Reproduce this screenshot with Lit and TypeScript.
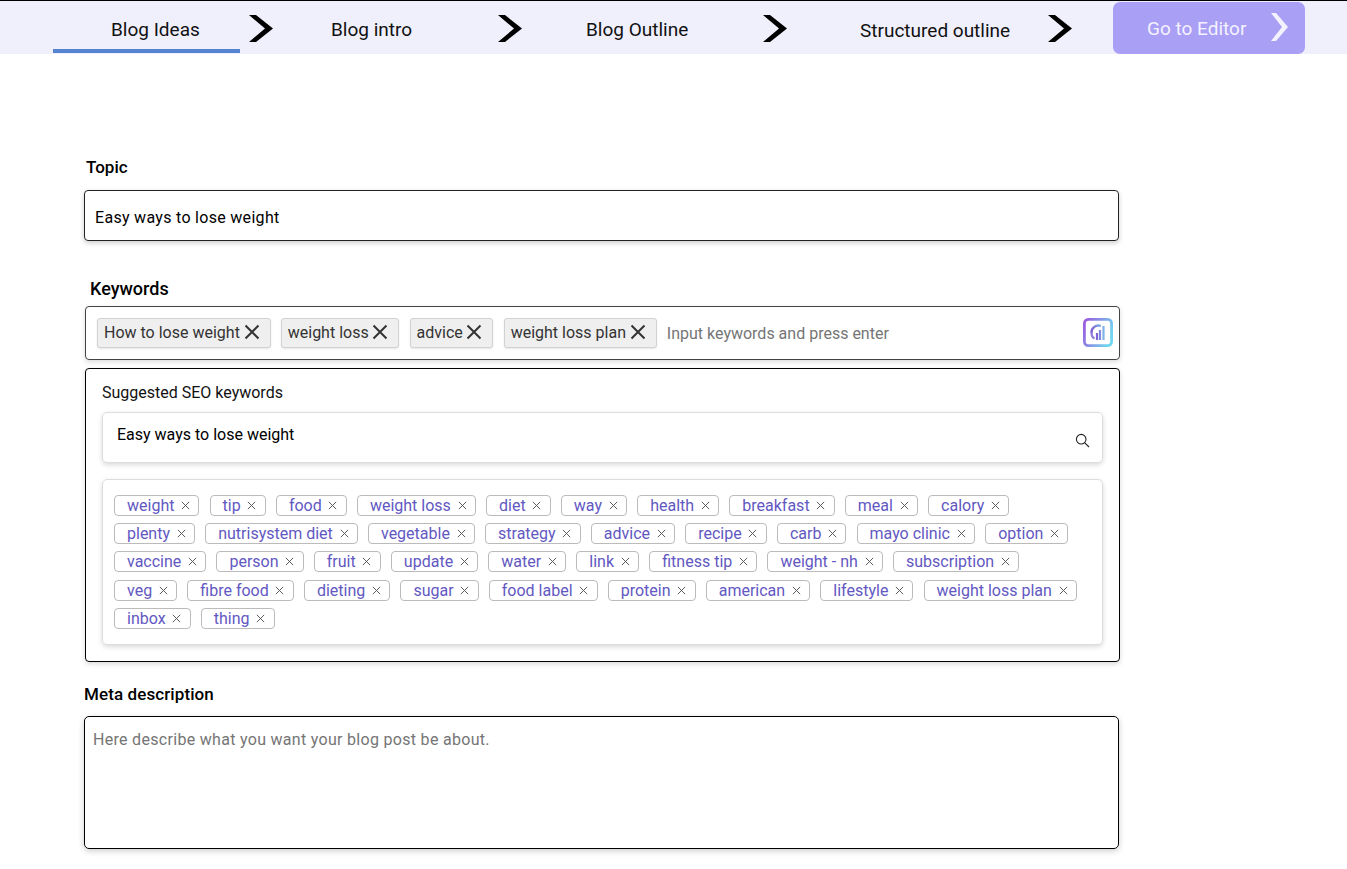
import { html, css, LitElement } from 'lit';
import { customElement } from 'lit/decorators.js';

// padLeft places the label inside the space between two arrows
const STEPS = [
  { label: 'Blog Ideas', padLeft: 58, width: 187, active: true, drop: 0 },
  { label: 'Blog intro', padLeft: 58, width: 225, active: false, drop: 0 },
  { label: 'Blog Outline', padLeft: 64, width: 241, active: false, drop: 0 },
  { label: 'Structured outline', padLeft: 73, width: 261, active: false, drop: 1 },
];

const CHOSEN = ['How to lose weight', 'weight loss', 'advice', 'weight loss plan'];

const SUGGESTED = [
  'weight', 'tip', 'food', 'weight loss', 'diet', 'way', 'health', 'breakfast', 'meal', 'calory',
  'plenty', 'nutrisystem diet', 'vegetable', 'strategy', 'advice', 'recipe', 'carb', 'mayo clinic', 'option',
  'vaccine', 'person', 'fruit', 'update', 'water', 'link', 'fitness tip', 'weight - nh', 'subscription',
  'veg', 'fibre food', 'dieting', 'sugar', 'food label', 'protein', 'american', 'lifestyle', 'weight loss plan',
  'inbox', 'thing',
];

@customElement('app-root')
export class AppRoot extends LitElement {
  static styles = css`
    :host {
      display: block;
      font-family: Roboto, "Liberation Sans", sans-serif;
      font-size: 16px;
      color: #000;
      background: #fff;
      min-height: 869px;
    }

    .nav {
      display: flex;
      align-items: flex-start;
      height: 53px;
      padding-left: 53px;
      background: #f0f0fd;
      border-top: 1px solid #000;
      font-size: 19px;
      color: #111;
    }

    .step {
      box-sizing: border-box;
      flex: none;
      height: 52px;
      padding-top: 18px;
      line-height: 22px;
      white-space: nowrap;
    }

    .step.active {
      border-bottom: 4px solid #5585d0;
    }

    .arrow {
      flex: none;
      width: 24px;
      height: 27px;
      margin-top: 14px;
    }

    .step.active + .arrow {
      margin-left: 9px;
    }

    .go {
      display: flex;
      align-items: center;
      box-sizing: border-box;
      width: 192px;
      height: 52px;
      margin: 1px 0 0 41px;
      padding: 1px 0 0 34px;
      background: #a99ff5;
      border-radius: 7px;
      color: #f4f2ff;
      font-size: 19px;
    }

    .go svg {
      width: 17px;
      height: 28px;
      margin: -4px 0 0 25px;
    }

    .form {
      display: flex;
      flex-direction: column;
      width: 1036px;
      margin-left: 84px;
      padding-top: 104px;
    }

    .label {
      font-size: 17px;
      font-weight: 500;
      line-height: 19px;
    }

    .topic-label {
      margin: 0 0 13px 2px;
    }

    .topic {
      box-sizing: border-box;
      width: 1035px;
      height: 51px;
      padding: 17px 10px 0;
      border: 1px solid #222;
      border-radius: 4px;
      box-shadow: 0 2px 5px rgba(0, 0, 0, 0.2);
      letter-spacing: 0.3px;
      line-height: 19px;
    }

    .keywords-label {
      margin: 37px 0 7px 6px;
      font-size: 18px;
      line-height: 21px;
    }

    .keywords {
      display: flex;
      align-items: center;
      box-sizing: border-box;
      height: 54px;
      margin-left: 1px;
      padding: 0 6px 0 11px;
      border: 1px solid #444;
      border-radius: 4px;
      box-shadow: 0 2px 5px rgba(0, 0, 0, 0.15);
    }

    .chip {
      display: flex;
      align-items: center;
      gap: 3.7px;
      box-sizing: border-box;
      height: 30px;
      margin-right: 10.2px;
      padding: 0 10px 2px 6px;
      background: #efefef;
      border: 1px solid #d2d2d2;
      border-radius: 3px;
      box-shadow: 0 1px 2px rgba(0, 0, 0, 0.1);
      color: #333;
      white-space: nowrap;
    }

    .chip svg {
      width: 16px;
      height: 16px;
    }

    .hint {
      flex: 1;
      color: #757575;
      white-space: nowrap;
    }

    .seo-icon {
      width: 30px;
      height: 30px;
    }

    .suggest {
      box-sizing: border-box;
      height: 294px;
      margin: 8px 0 0 1px;
      padding: 14px 16px 0;
      border: 1px solid #000;
      border-radius: 4px;
      box-shadow: 0 2px 5px rgba(0, 0, 0, 0.15);
    }

    .suggest-title {
      line-height: 19px;
      color: #111;
    }

    .search {
      display: flex;
      justify-content: space-between;
      box-sizing: border-box;
      height: 51px;
      margin-top: 10px;
      padding: 12px 12px 0 14px;
      border: 1px solid #ddd;
      border-radius: 5px;
      box-shadow: 0 2px 5px rgba(0, 0, 0, 0.15);
      line-height: 19px;
    }

    .search svg {
      width: 15px;
      height: 15px;
      margin-top: 8px;
    }

    .panel {
      display: flex;
      flex-wrap: wrap;
      align-content: flex-start;
      gap: 7.2px 10.2px;
      box-sizing: border-box;
      height: 166px;
      margin-top: 16px;
      padding: 15px 20px 0 11px;
      border: 1px solid #ddd;
      border-radius: 5px;
      box-shadow: 0 2px 5px rgba(0, 0, 0, 0.15);
    }

    .tag {
      display: flex;
      align-items: center;
      gap: 6.7px;
      box-sizing: border-box;
      height: 21px;
      padding: 0 8.3px 0 12px;
      border: 1px solid #bbb;
      border-radius: 4px;
      color: #6258c2;
      white-space: nowrap;
    }

    .tag svg {
      width: 9px;
      height: 9px;
    }

    .meta-label {
      margin: 23px 0 12px;
      letter-spacing: 0.1px;
    }

    .meta {
      box-sizing: border-box;
      width: 1035px;
      height: 133px;
      padding: 13px 8px 0;
      border: 1px solid #000;
      border-radius: 5px;
      box-shadow: 0 2px 6px rgba(0, 0, 0, 0.2);
      color: #757575;
      letter-spacing: 0.3px;
      line-height: 19px;
    }
  `;

  private renderCross(color: string, weight: number) {
    return html`<svg viewBox="0 0 16 16">
      <path d="M1.5 1.5 L14.5 14.5 M14.5 1.5 L1.5 14.5" stroke=${color} stroke-width=${weight} fill="none" />
    </svg>`;
  }

  private renderSeoIcon() {
    return html`<svg class="seo-icon" viewBox="0 0 30 30">
      <defs>
        <linearGradient id="seo" x1="0" y1="0.2" x2="1" y2="0.6">
          <stop offset="0" stop-color="#9a5fe0" />
          <stop offset="1" stop-color="#6fd6ef" />
        </linearGradient>
        <linearGradient id="seo-in" x1="0" y1="0" x2="1" y2="0">
          <stop offset="0" stop-color="#7f62d8" />
          <stop offset="1" stop-color="#7fb4e8" />
        </linearGradient>
      </defs>
      <rect x="1.4" y="1.4" width="27.2" height="26.2" rx="4" fill="#fff" stroke="url(#seo)" stroke-width="2.8" />
      <path d="M8.5 15 A7 7 0 0 1 18 8" fill="none" stroke="url(#seo-in)" stroke-width="2.4" />
      <path d="M8.5 15 Q8.5 19 11.5 20.5" fill="none" stroke="#8f80dc" stroke-width="2.2" />
      <path d="M14 22 V15 M17 22 V12 M20.5 22 V8" stroke="url(#seo-in)" stroke-width="2.2" />
    </svg>`;
  }

  render() {
    return html`
      <div class="nav">
        ${STEPS.map(step => html`
          <div
            class="step ${step.active ? 'active' : ''}"
            style="width: ${step.width}px; padding-left: ${step.padLeft}px; padding-top: ${18 + step.drop}px;">${step.label}</div>
          <svg class="arrow" viewBox="0 0 24 27">
            <polygon points="0,0 7,0 24,13.5 7,27 0,27 16,13.5" fill="#000" />
          </svg>
        `)}
        <div class="go">
          Go to Editor
          <svg viewBox="0 0 17 28"><polygon points="0,0 5,0 17,14 5,28 0,28 11,14" fill="#f4f2ff" /></svg>
        </div>
      </div>

      <div class="form">
        <div class="label topic-label">Topic</div>
        <div class="topic">Easy ways to lose weight</div>

        <div class="label keywords-label">Keywords</div>
        <div class="keywords">
          ${CHOSEN.map(word => html`<span class="chip">${word}${this.renderCross('#333', 2)}</span>`)}
          <span class="hint">Input keywords and press enter</span>
          ${this.renderSeoIcon()}
        </div>

        <div class="suggest">
          <div class="suggest-title">Suggested SEO keywords</div>
          <div class="search">
            <span>Easy ways to lose weight</span>
            <svg viewBox="0 0 15 15">
              <circle cx="6.2" cy="6.2" r="4.8" fill="none" stroke="#222" stroke-width="1.1" />
              <path d="M9.8 9.8 L14 14" stroke="#222" stroke-width="1.1" />
            </svg>
          </div>
          <div class="panel">
            ${SUGGESTED.map(word => html`<span class="tag">${word}${this.renderCross('#555', 1.7)}</span>`)}
          </div>
        </div>

        <div class="label meta-label">Meta description</div>
        <div class="meta">Here describe what you want your blog post be about.</div>
      </div>
    `;
  }
}

declare global {
  interface HTMLElementTagNameMap {
    'app-root': AppRoot;
  }
}
